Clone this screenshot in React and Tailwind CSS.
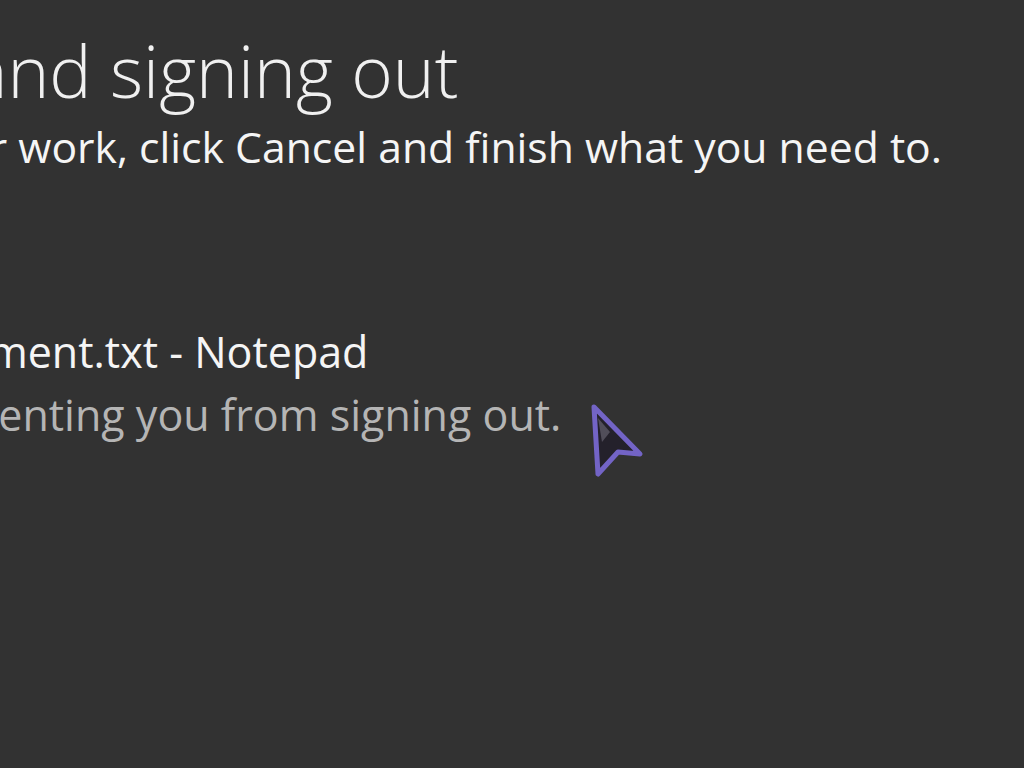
import React from 'react';

const Cursor = () => (
  <svg className="absolute left-[588px] top-[402px]" width="60" height="78" viewBox="0 0 60 78">
    <polygon
      points="6,5 52,52 30,50 10,72"
      fill="#24212b"
      stroke="#7364c6"
      strokeWidth="5"
      strokeLinejoin="round"
    />
    <polygon points="10,16 14,40 22,30" fill="#8a8594" opacity="0.45" />
  </svg>
);

export default function App() {
  return (
    <div className="relative w-[1024px] h-[768px] overflow-hidden bg-[#323232] font-['Open_Sans',sans-serif] text-[#f0f0f0]">
      {/* Header */}
      <div className="flex flex-col pt-[35px] ml-[-495px]">
        <h1 className="ml-[43px] whitespace-nowrap text-[71px] font-light leading-none">
          Closing apps and signing out
        </h1>
        <p className="mt-[20px] whitespace-nowrap text-[42.7px] leading-none text-[#f5f5f5]">
          To go back and save your work, click Cancel and finish what you need to.
        </p>
      </div>

      {/* App list */}
      <div className="flex flex-col mt-[161px] ml-[-314px]">
        <div className="whitespace-nowrap text-[43px] leading-none text-[#f5f5f5]">
          New Text Document.txt - Notepad
        </div>
        <div className="mt-[20px] whitespace-nowrap text-[43px] leading-none text-[#b5b5b5]">
          This app is preventing you from signing out.
        </div>
      </div>

      <Cursor />
    </div>
  );
}
